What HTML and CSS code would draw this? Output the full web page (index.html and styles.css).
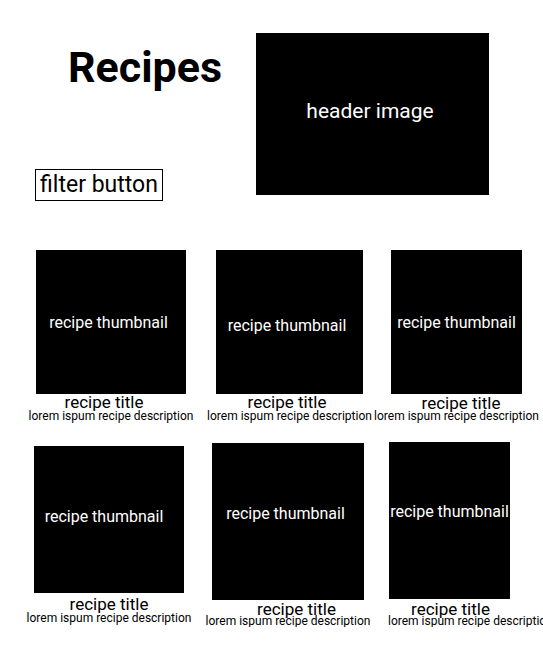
FILE: index.html
```html
<!DOCTYPE html>
<html lang="en">
<head>
    <meta charset="UTF-8">
    <meta name="viewport" content="width=device-width, initial-scale=1.0">
    <title>Recipes</title>
    <link rel="stylesheet" href="styles.css">
</head>
<body>

<header class="top">
    <div class="intro">
        <h1 class="page-title">Recipes</h1>
        <button class="filter">filter button</button>
    </div>
    <div class="hero">header image</div>
</header>

<main>
    <div class="row row-1">
        <div class="card card-1">
            <div class="thumb">recipe thumbnail</div>
            <p class="card-title">recipe title</p>
            <p class="card-desc">lorem ispum recipe description</p>
        </div>
        <div class="card card-2">
            <div class="thumb">recipe thumbnail</div>
            <p class="card-title">recipe title</p>
            <p class="card-desc">lorem ispum recipe description</p>
        </div>
        <div class="card card-3">
            <div class="thumb">recipe thumbnail</div>
            <p class="card-title">recipe title</p>
            <p class="card-desc">lorem ispum recipe description</p>
        </div>
    </div>

    <div class="row row-2">
        <div class="card card-4">
            <div class="thumb">recipe thumbnail</div>
            <p class="card-title">recipe title</p>
            <p class="card-desc">lorem ispum recipe description</p>
        </div>
        <div class="card card-5">
            <div class="thumb">recipe thumbnail</div>
            <p class="card-title">recipe title</p>
            <p class="card-desc">lorem ispum recipe description</p>
        </div>
        <div class="card card-6">
            <div class="thumb">recipe thumbnail</div>
            <p class="card-title">recipe title</p>
            <p class="card-desc">lorem ispum recipe description</p>
        </div>
    </div>
</main>

</body>
</html>
```

FILE: styles.css
```css
html, body {
    overflow-x: hidden;
}
body {
    margin: 0;
    font-family: Roboto, "Liberation Sans", sans-serif;
    background-color: #fff;
    color: #000;
}

/* header */
.top {
    display: flex;
    padding: 33px 0 0 35px;
}
.intro {
    width: 221px;
}
.page-title {
    margin: 10px 0 0 33px;
    font-size: 43px;
    line-height: 48px;
    font-weight: 700;
}
.filter {
    display: block;
    margin-top: 78px;
    width: 128px;
    height: 32px;
    padding: 0;
    border: 1px solid #000;
    background-color: #fff;
    color: #000;
    font-family: inherit;
    font-size: 23px;
    line-height: 30px;
    white-space: nowrap;
}
.hero {
    width: 233px;
    height: 162px;
    display: flex;
    align-items: center;
    justify-content: center;
    padding: 0 5px 6px 0;
    box-sizing: border-box;
    background-color: #000;
    color: #fff;
    font-size: 21px;
}

/* recipe cards */
.row {
    display: flex;
    align-items: flex-start;
}
.row-1 {
    margin-top: 49px;
}
.row-2 {
    margin-top: 20px;
}
.card {
    display: flex;
    flex-direction: column;
    align-items: center;
    flex-shrink: 0;
}
.thumb {
    align-self: stretch;
    display: flex;
    align-items: center;
    justify-content: center;
    padding-right: 5px;
    box-sizing: border-box;
    background-color: #000;
    color: #fff;
    font-size: 16px;
    white-space: nowrap;
}
.card-title {
    margin: 0;
    font-size: 17px;
    line-height: 16px;
    white-space: nowrap;
}
.card-desc {
    margin: 0;
    font-size: 12px;
    line-height: 12px;
    white-space: nowrap;
}

.card-1 { margin-left: 36px; width: 150px; }
.card-1 .thumb { height: 144px; }
.card-1 .card-title { margin-right: 14px; }

.card-2 { margin-left: 30px; width: 147px; }
.card-2 .thumb { height: 144px; padding-top: 7px; }
.card-2 .card-title { margin-right: 5px; }

.card-3 { margin-left: 28px; width: 131px; }
.card-3 .thumb { height: 144px; padding-right: 0; }
.card-3 .card-title { margin-left: 9px; margin-top: 1px; }
.card-3 .card-desc { margin-top: -1px; }

.card-4 { margin-left: 34px; margin-top: 4px; width: 150px; }
.card-4 .thumb { height: 147px; padding: 0 10px 6px 0; }
.card-4 .card-title { margin-top: 3px; }
.card-4 .card-desc { margin-top: 0; }

.card-5 { margin-left: 28px; margin-top: 1px; width: 152px; }
.card-5 .thumb { height: 157px; padding-bottom: 17px; }
.card-5 .card-title { margin-left: 17px; margin-top: 1px; }
.card-5 .card-desc { margin-top: -2px; }

.card-6 { margin-left: 25px; width: 121px; }
.card-6 .thumb { height: 157px; padding: 0 0 18px; }
.card-6 .card-title { margin-left: 2px; margin-top: 2px; }
.card-6 .card-desc { align-self: flex-start; margin-left: -1px; margin-top: -2px; }
```
